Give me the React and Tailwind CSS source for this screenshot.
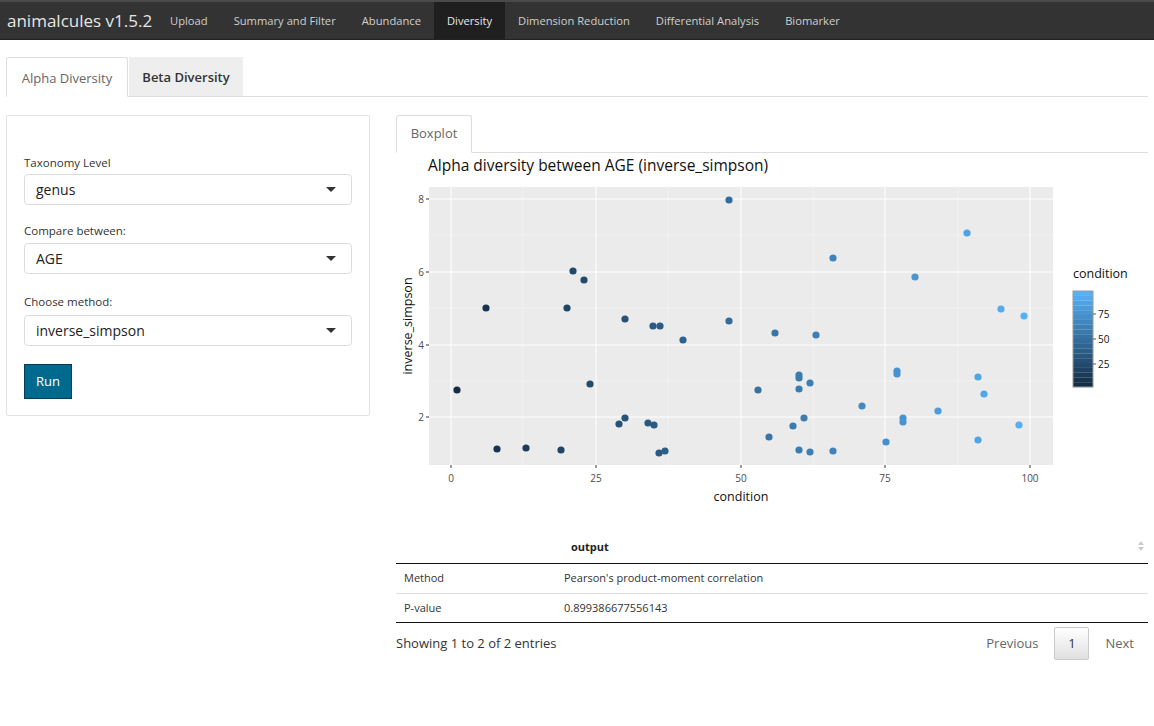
import React from 'react';

const navItems = ['Upload', 'Summary and Filter', 'Abundance', 'Diversity', 'Dimension Reduction', 'Differential Analysis', 'Biomarker'];

// pixel positions read off the plot, relative to the page
const points = [
  [486, 308], [567, 308], [625, 319], [653, 326], [660, 326], [683, 340], [729, 321], [775, 333],
  [457, 390], [590, 384], [758, 390], [625, 418], [619, 424], [648, 423], [654, 425], [769, 437],
  [497, 449], [526, 448], [561, 450], [659, 453], [665, 451], [729, 200], [573, 271], [584, 280],
  [833, 258], [967, 233], [915, 277], [1001, 309], [1024, 316], [816, 335], [799, 375], [799, 378],
  [810, 383], [799, 389], [897, 371], [897, 374], [978, 377], [984, 394], [862, 406], [938, 411],
  [804, 418], [793, 426], [903, 418], [903, 422], [1019, 425], [978, 440], [886, 442], [799, 450],
  [810, 452], [833, 451],
];

const lo = [19, 43, 67];
const hi = [86, 177, 247];
const colorFor = (v) => {
  const t = Math.max(0, Math.min(1, v / 100));
  const c = lo.map((l, i) => Math.round(l + (hi[i] - l) * t));
  return `rgb(${c[0]},${c[1]},${c[2]})`;
};

// plot svg origin at page (396, 153)
const OX = 396;
const OY = 153;

const Plot = () => {
  const xTicks = [[451, '0'], [596, '25'], [741, '50'], [885, '75'], [1030, '100']];
  const yTicks = [[199, '8'], [272, '6'], [345, '4'], [417, '2']];
  const xMinor = [523, 668, 813, 958];
  const yMinor = [235, 308, 381];
  const legendSteps = Array.from({ length: 20 }, (_, i) => i);
  return (
    <svg width="752" height="362" className="block">
      <text x={428 - OX} y={171 - OY} fontSize="15.5" fill="#111" fontFamily="'Open Sans', sans-serif">
        Alpha diversity between AGE (inverse_simpson)
      </text>
      <rect x={429 - OX} y={187 - OY} width={624} height={278} fill="#ebebeb" />
      {xMinor.map((x) => (
        <line key={'xm' + x} x1={x - OX} x2={x - OX} y1={187 - OY} y2={465 - OY} stroke="#f5f5f5" strokeWidth="0.6" />
      ))}
      {yMinor.map((y) => (
        <line key={'ym' + y} x1={429 - OX} x2={1053 - OX} y1={y - OY} y2={y - OY} stroke="#f5f5f5" strokeWidth="0.6" />
      ))}
      {xTicks.map(([x]) => (
        <line key={'x' + x} x1={x - OX} x2={x - OX} y1={187 - OY} y2={465 - OY} stroke="#fff" strokeWidth="1.1" />
      ))}
      {yTicks.map(([y]) => (
        <line key={'y' + y} x1={429 - OX} x2={1053 - OX} y1={y - OY} y2={y - OY} stroke="#fff" strokeWidth="1.1" />
      ))}
      {points.map(([x, y], i) => (
        <circle key={i} cx={x - OX} cy={y - OY} r="3.6" fill={colorFor((x - 451) / 5.79)} />
      ))}
      {xTicks.map(([x, l]) => (
        <g key={'xt' + x}>
          <line x1={x - OX} x2={x - OX} y1={465 - OY} y2={468 - OY} stroke="#333" strokeWidth="1" />
          <text x={x - OX} y={482 - OY} fontSize="10" fill="#4d4d4d" textAnchor="middle" fontFamily="'Open Sans', sans-serif">{l}</text>
        </g>
      ))}
      {yTicks.map(([y, l]) => (
        <g key={'yt' + y}>
          <line x1={426 - OX} x2={429 - OX} y1={y - OY} y2={y - OY} stroke="#333" strokeWidth="1" />
          <text x={424 - OX} y={y - OY + 3.5} fontSize="10" fill="#4d4d4d" textAnchor="end" fontFamily="'Open Sans', sans-serif">{l}</text>
        </g>
      ))}
      <text x={741 - OX} y={501 - OY} fontSize="12.5" fill="#111" textAnchor="middle" fontFamily="'Open Sans', sans-serif">condition</text>
      <text transform={`translate(${412 - OX},${326 - OY}) rotate(-90)`} fontSize="12.5" fill="#111" textAnchor="middle" fontFamily="'Open Sans', sans-serif">inverse_simpson</text>
      <text x={1073 - OX} y={278 - OY} fontSize="12.5" fill="#111" fontFamily="'Open Sans', sans-serif">condition</text>
      {legendSteps.map((i) => (
        <rect key={'l' + i} x={1073 - OX} y={291 - OY + i * 4.8} width="20" height="4.9" fill={colorFor(100 - i * 5.2)} />
      ))}
      <rect x={1073 - OX} y={291 - OY} width="20" height="96" fill="none" stroke="#9a9a9a" strokeWidth="1" />
      {[[314, '75'], [339, '50'], [364, '25']].map(([y, l]) => (
        <g key={'lg' + y}>
          <line x1={1093 - OX} x2={1096 - OX} y1={y - OY} y2={y - OY} stroke="#333" strokeWidth="0.8" />
          <text x={1098 - OX} y={y - OY + 3.5} fontSize="10" fill="#111" fontFamily="'Open Sans', sans-serif">{l}</text>
        </g>
      ))}
    </svg>
  );
};

const Select = ({ value }) => (
  <div className="flex items-center justify-between h-[31px] border border-[#dcdcdc] rounded-[4px] bg-white pl-[11px] pr-[15px] text-[14px] text-[#222]">
    <span>{value}</span>
    <span className="w-0 h-0 border-l-[5px] border-r-[5px] border-t-[5px] border-l-transparent border-r-transparent border-t-[#333]" />
  </div>
);

export default function App() {
  return (
    <div className="min-h-[726px] bg-white text-[#333]" style={{ fontFamily: "'Open Sans', sans-serif" }}>
      <div className="h-[40px] bg-[#333] border-t-2 border-t-[#4a4a4a] border-b border-b-[#222] flex items-stretch">
        <div className="w-[157px] pl-[7px] flex items-center text-[17px] text-[#e6e6e6]">animalcules v1.5.2</div>
        {navItems.map((n) => (
          <div
            key={n}
            className={`px-[13px] flex items-center pt-px text-[11.2px] ${n === 'Diversity' ? 'bg-[#1f1f1f] text-[#e8e8e8]' : 'text-[#cfcfcf]'}`}
          >
            {n}
          </div>
        ))}
      </div>

      <div className="px-[6px] pt-[17px]">
        <div className="flex border-b border-[#ddd] h-[40px]">
          <div className="w-[122px] border border-[#ddd] border-b-white -mb-px bg-white rounded-t-[3px] flex items-center justify-center pt-[3px] text-[13px] text-[#666]">
            Alpha Diversity
          </div>
          <div className="w-[114px] ml-px bg-[#eeeeee] flex items-center justify-center pt-[3px] text-[13px] font-semibold text-[#333]">
            Beta Diversity
          </div>
        </div>

        <div className="flex mt-[18px]">
          <div className="w-[364px] shrink-0">
            <div className="border border-[#e3e3e3] rounded-[2px] h-[301px] px-[17px] pt-[38px]">
              <div className="text-[11.5px] text-[#333] mb-[3px]">Taxonomy Level</div>
              <Select value="genus" />
              <div className="text-[11.5px] text-[#333] mt-[17px] mb-[3px]">Compare between:</div>
              <Select value="AGE" />
              <div className="text-[11.5px] text-[#333] mt-[19px] mb-[5px]">Choose method:</div>
              <Select value="inverse_simpson" />
              <div className="mt-[18px] w-[48px] h-[35px] bg-[#006a8e] border border-[#003f55] text-white text-[13px] flex items-center justify-center">
                Run
              </div>
            </div>
          </div>

          <div className="ml-[26px] flex-1 min-w-0">
            <div className="flex border-b border-[#ddd] h-[38px]">
              <div className="w-[76px] border border-[#ddd] border-b-white -mb-px bg-white rounded-t-[3px] flex items-center justify-center text-[13px] text-[#666]">
                Boxplot
              </div>
            </div>
            <Plot />

            <div className="mt-[16px]">
              <div className="relative h-[33px] border-b border-[#111] flex items-center text-[11px] font-bold text-[#222]">
                <div className="w-[175px]" />
                <div>output</div>
                <div className="absolute right-[4px] top-[10px] flex flex-col items-center gap-[2px]">
                  <span className="w-0 h-0 border-l-[3px] border-r-[3px] border-b-[4px] border-l-transparent border-r-transparent border-b-[#ccc]" />
                  <span className="w-0 h-0 border-l-[3px] border-r-[3px] border-t-[4px] border-l-transparent border-r-transparent border-t-[#ccc]" />
                </div>
              </div>
              <div className="h-[30px] border-b border-[#ddd] flex items-center text-[11px] text-[#333]">
                <div className="w-[168px] pl-[8px]">Method</div>
                <div>Pearson's product-moment correlation</div>
              </div>
              <div className="h-[29px] border-b border-[#111] flex items-center text-[11px] text-[#333]">
                <div className="w-[168px] pl-[8px]">P-value</div>
                <div>0.899386677556143</div>
              </div>
              <div className="flex items-center justify-between mt-[4px] h-[33px]">
                <div className="text-[13px] text-[#333]">Showing 1 to 2 of 2 entries</div>
                <div className="flex items-center text-[13px] text-[#666]">
                  <span className="mr-[16px]">Previous</span>
                  <span className="w-[35px] h-[33px] border border-[#cacaca] rounded-[2px] bg-gradient-to-b from-white to-[#e0e0e0] flex items-center justify-center text-[#333]">1</span>
                  <span className="ml-[16px] mr-[14px]">Next</span>
                </div>
              </div>
            </div>
          </div>
        </div>
      </div>
    </div>
  );
}
